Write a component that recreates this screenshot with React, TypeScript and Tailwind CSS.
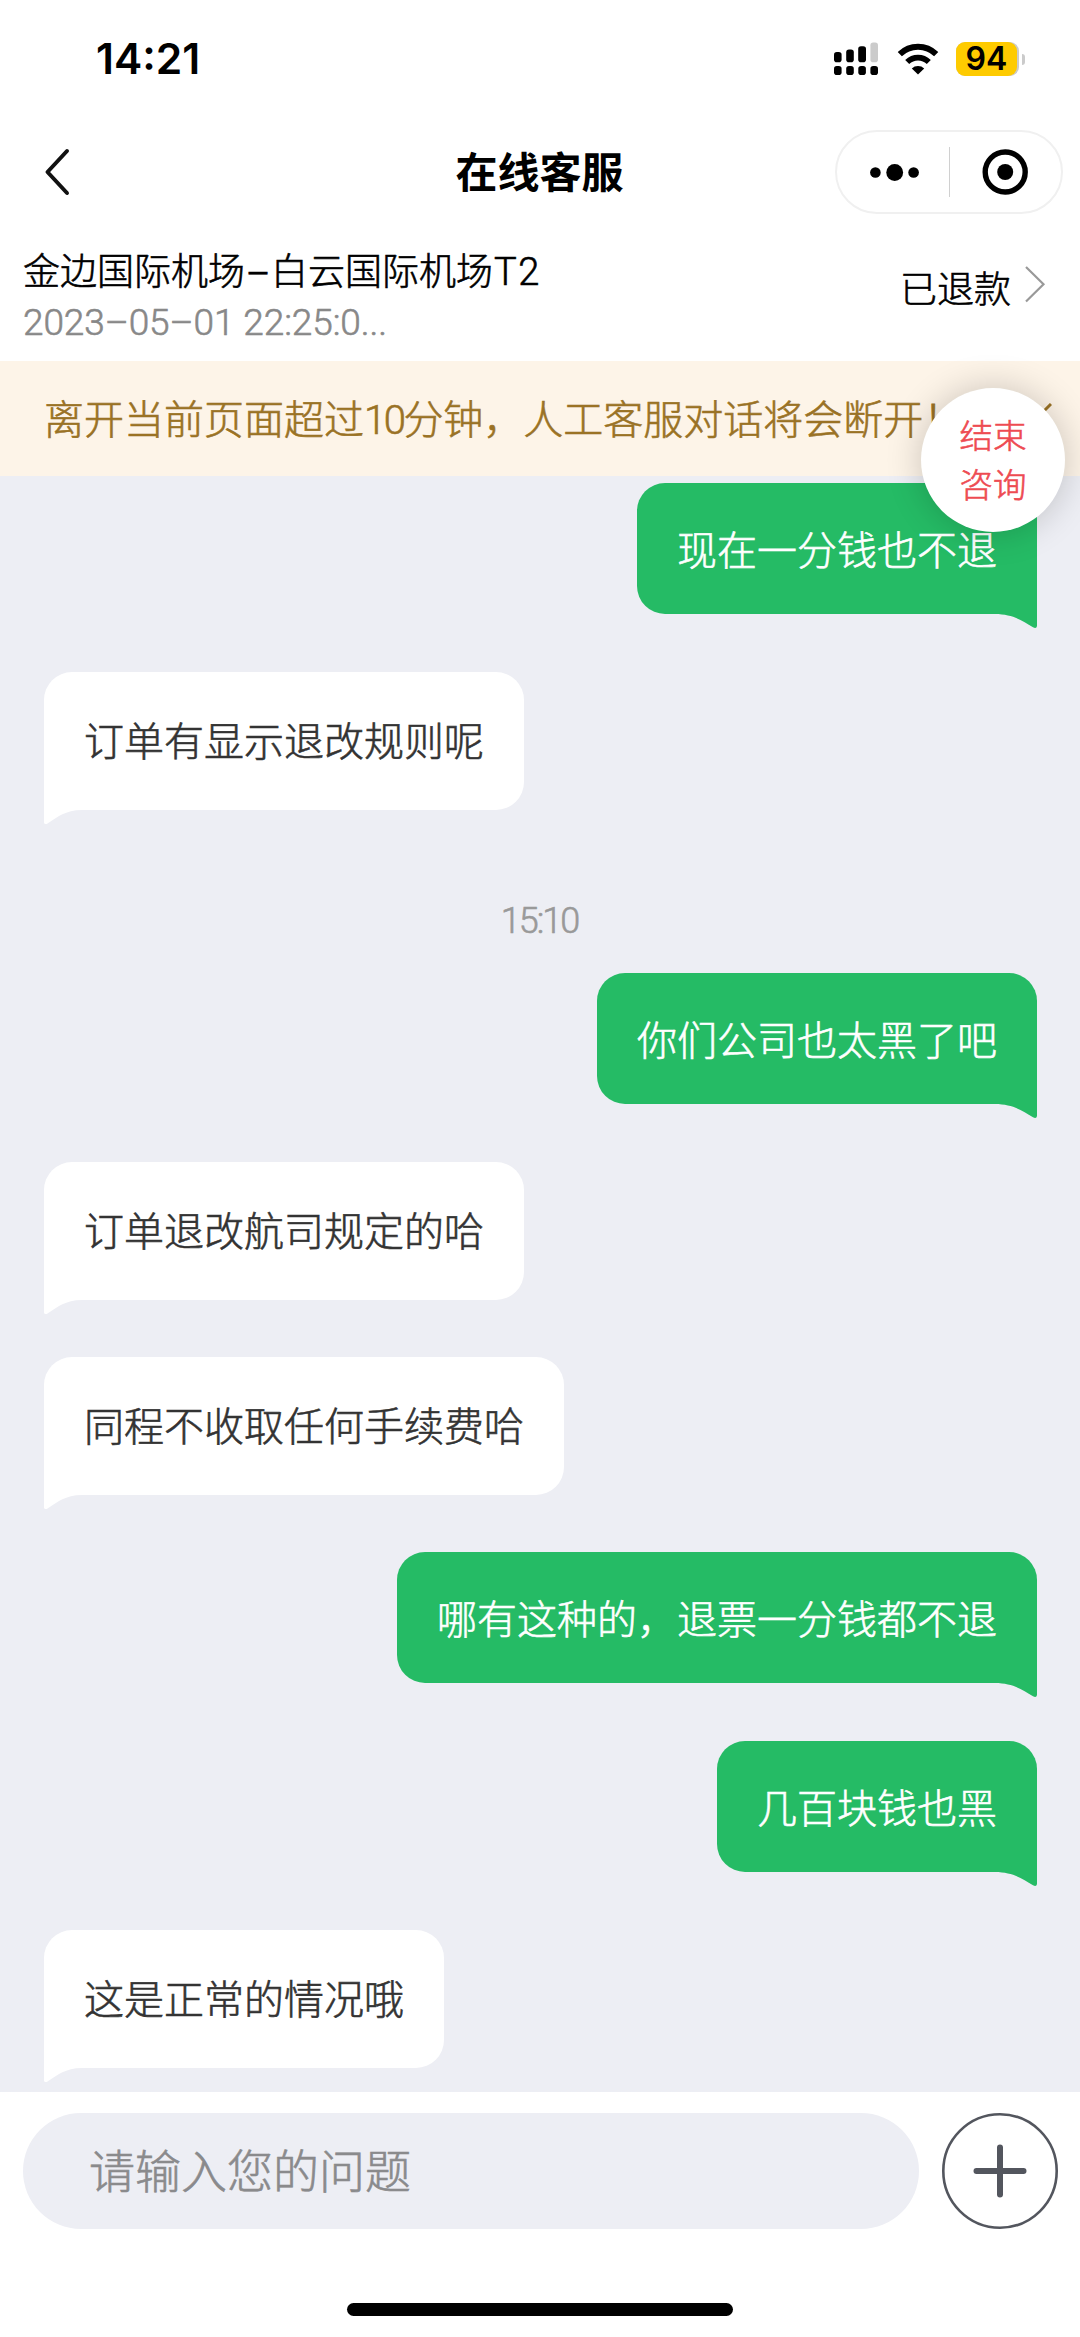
import React from "react";

type Message =
  | { kind: "agent" | "user"; text: string }
  | { kind: "time"; text: string };

const messages: Message[] = [
  { kind: "user", text: "现在一分钱也不退" },
  { kind: "agent", text: "订单有显示退改规则呢" },
  { kind: "time", text: "15:10" },
  { kind: "user", text: "你们公司也太黑了吧" },
  { kind: "agent", text: "订单退改航司规定的哈" },
  { kind: "agent", text: "同程不收取任何手续费哈" },
  { kind: "user", text: "哪有这种的，退票一分钱都不退" },
  { kind: "user", text: "几百块钱也黑" },
  { kind: "agent", text: "这是正常的情况哦" },
];

function StatusBar() {
  return (
    <div className="flex h-[118px] shrink-0 items-center justify-between pr-[55px] pl-[96px] [-webkit-text-stroke:0]">
      <span className="pt-[1px] font-[Inter] text-[42.5px] leading-none font-semibold">14:21</span>
      <div className="flex items-center">
        <svg width="46" height="34" viewBox="0 0 46 34" className="mr-[17px]">
          <rect x="0" y="10" width="7.6" height="10.2" rx="2.8" />
          <rect x="12.2" y="7.6" width="7.6" height="12.6" rx="2.8" />
          <rect x="24.2" y="4.2" width="7.8" height="16" rx="2.8" />
          <rect x="36.4" y="0.6" width="7.6" height="19.6" rx="2.8" fill="#cbcbcb" />
          {[0, 12.2, 24.3, 36.4].map((x) => (
            <rect key={x} x={x} y="24" width="7.6" height="9" rx="2.8" />
          ))}
        </svg>
        <svg width="42" height="32" viewBox="0 0 42 32" className="mr-[17px]">
          <path d="M2.8 11.2 A26 26 0 0 1 39.2 11.2" fill="none" stroke="#000" strokeWidth="6" />
          <path d="M10.2 19 A15.6 15.6 0 0 1 31.8 19" fill="none" stroke="#000" strokeWidth="5.8" />
          <path d="M21 31.6 L14.8 25.4 A9 9 0 0 1 27.2 25.4 Z" />
        </svg>
        <div className="flex h-[34px] w-[63px] rounded-[9px] bg-[#cbcbcb]">
          <div className="flex h-[34px] w-[61px] items-center justify-center rounded-[9px] bg-[#fecb00]">
            <span className="font-[Inter] text-[32px] leading-none font-semibold">94</span>
          </div>
        </div>
        <div className="ml-[3px] h-[11px] w-[3px] rounded-r-full bg-[#cbcbcb]" />
      </div>
    </div>
  );
}

function NavBar() {
  return (
    <div className="grid h-[108px] shrink-0 grid-cols-3 items-center pr-[17px] pl-[42px]">
      <svg width="30" height="50" viewBox="0 0 30 50" fill="none" stroke="#111" strokeWidth="4" strokeLinecap="round" strokeLinejoin="round">
        <path d="M25 4 L5.5 25 L25 46" />
      </svg>
      <h1 className="-ml-[26px] pt-[4px] text-center text-[42px] leading-none font-bold whitespace-nowrap [-webkit-text-stroke:0]">
        在线客服
      </h1>
      <div className="flex h-[84px] w-[228px] items-center justify-self-end rounded-full border-2 border-[#f0f0f0]">
        <svg width="112" height="50" viewBox="0 0 112 50">
          <circle cx="38.4" cy="25.5" r="5.3" />
          <circle cx="57.7" cy="25.5" r="8.4" />
          <circle cx="76.6" cy="25.5" r="5.3" />
        </svg>
        <div className="h-[50px] w-px bg-[#d0d0d0]" />
        <svg width="111" height="50" viewBox="0 0 111 50">
          <circle cx="55.2" cy="25" r="20" fill="none" stroke="#000" strokeWidth="5.4" />
          <circle cx="55.2" cy="25" r="8" />
        </svg>
      </div>
    </div>
  );
}

function OrderBar() {
  return (
    <div className="flex h-[135px] shrink-0 justify-between pr-[33px] pl-[23px]">
      <div className="pt-[21px]">
        <div className="text-[37px] leading-[50px] whitespace-nowrap text-black">
          金边国际机场<span className="inline-block w-[26px] text-center font-[Inter]">–</span>白云国际机场
          <span className="pl-[1px] text-[38px] tracking-[1.5px]">T2</span>
        </div>
        <div className="text-[37px] leading-[50px] tracking-[-0.1px] whitespace-nowrap text-[#888]">
          2023–05–01 22:25:0...
        </div>
      </div>
      <div className="flex h-[124px] items-center">
        <span className="pt-[4px] text-[37px] leading-none text-black">已退款</span>
        <svg width="24" height="40" viewBox="0 0 24 40" className="mb-[8px] ml-[12px]" fill="none" stroke="#999" strokeWidth="2.2">
          <path d="M3 3 L20.5 20.3 L3 37.5" />
        </svg>
      </div>
    </div>
  );
}

function NoticeBanner() {
  return (
    <div className="relative flex h-[115px] shrink-0 items-center justify-between bg-[#fdf4e8] pr-[28px] pl-[44px] text-[#9a7225]">
      <span className="pt-[5px] text-[40px] leading-none whitespace-nowrap">
        离开当前页面超过<span className="tracking-[-2.5px]">10</span>分钟，人工客服对话将会断开！
      </span>
      <svg width="32" height="32" viewBox="0 0 32 32" stroke="#9a7225" strokeWidth="3">
        <path d="M1 1 L31 31 M31 1 L1 31" />
      </svg>
      <button className="absolute top-[27px] right-[15px] z-10 flex h-[144px] w-[144px] flex-col items-center justify-center rounded-full bg-white pt-[2px] text-[33.5px] leading-[49.5px] text-[#ee4b52] shadow-[0_0_36px_rgba(0,0,0,0.2)]">
        <span>结束</span>
        <span>咨询</span>
      </button>
    </div>
  );
}

function Bubble({ kind, text }: { kind: "agent" | "user"; text: string }) {
  if (kind === "user") {
    return (
      <div className="relative mb-[58px] flex h-[131px] shrink-0 items-center self-end rounded-[28px] rounded-br-none bg-[#25bb65] px-[40px]">
        <span className="pt-[6px] text-[40px] leading-none whitespace-nowrap text-white">{text}</span>
        <svg width="48" height="17" viewBox="0 0 48 17" className="absolute right-0 -bottom-[15px]" fill="#25bb65">
          <path d="M0 0 H48 V14 Q47.5 17 44 15.2 C33 8.5 24 2.2 6 2 H0 Z" />
        </svg>
      </div>
    );
  }
  return (
    <div className="relative mb-[57px] flex h-[138px] shrink-0 items-center self-start rounded-[28px] rounded-bl-none bg-white px-[40px]">
      <span className="pt-[4px] text-[40px] leading-none whitespace-nowrap text-[#333]">{text}</span>
      <svg width="44" height="17" viewBox="0 0 44 17" className="absolute -bottom-[15px] left-0" fill="#fff">
        <path d="M44 0 H0 V15 Q0.8 17 4 15.2 C14 9 21 2.2 38 2 H44 Z" />
      </svg>
    </div>
  );
}

function Composer() {
  return (
    <div className="flex h-[245px] shrink-0 flex-col items-center justify-between bg-white pt-[21px] pb-[21px]">
      <div className="flex w-full items-center pl-[23px]">
        <div className="flex h-[116px] w-[896px] items-center rounded-full bg-[#edeef4] pl-[66px]">
          <span className="pt-[2px] text-[46px] leading-none text-[#8a8a8c]">请输入您的问题</span>
        </div>
        <svg width="118" height="118" viewBox="0 0 118 118" className="-my-px ml-[21.5px]" fill="none" stroke="#53565e">
          <circle cx="59" cy="59" r="56.7" strokeWidth="2.6" />
          <path d="M59 35.5 V82.5 M35.5 59 H82.5" strokeWidth="6" strokeLinecap="round" />
        </svg>
      </div>
      <div className="h-[13px] w-[386px] rounded-full bg-black" />
    </div>
  );
}

export default function App() {
  return (
    <div className="flex h-[2337px] w-[1080px] flex-col overflow-hidden bg-white font-[Roboto,'Noto_Sans_CJK_SC',sans-serif] font-light text-black [-webkit-text-stroke:0.6px]">
      <StatusBar />
      <NavBar />
      <OrderBar />
      <NoticeBanner />
      <main className="flex h-[1616px] shrink-0 flex-col overflow-hidden bg-[#edeef4] pt-[7px] pr-[43px] pl-[44px]">
        {messages.map((m, i) =>
          m.kind === "time" ? (
            <div
              key={i}
              className="flex h-[106px] shrink-0 items-center justify-center pt-[2px] pr-[2px] text-[36px] leading-none tracking-[-2px] text-[#999]"
            >
              {m.text}
            </div>
          ) : (
            <Bubble key={i} kind={m.kind} text={m.text} />
          ),
        )}
      </main>
      <Composer />
    </div>
  );
}
